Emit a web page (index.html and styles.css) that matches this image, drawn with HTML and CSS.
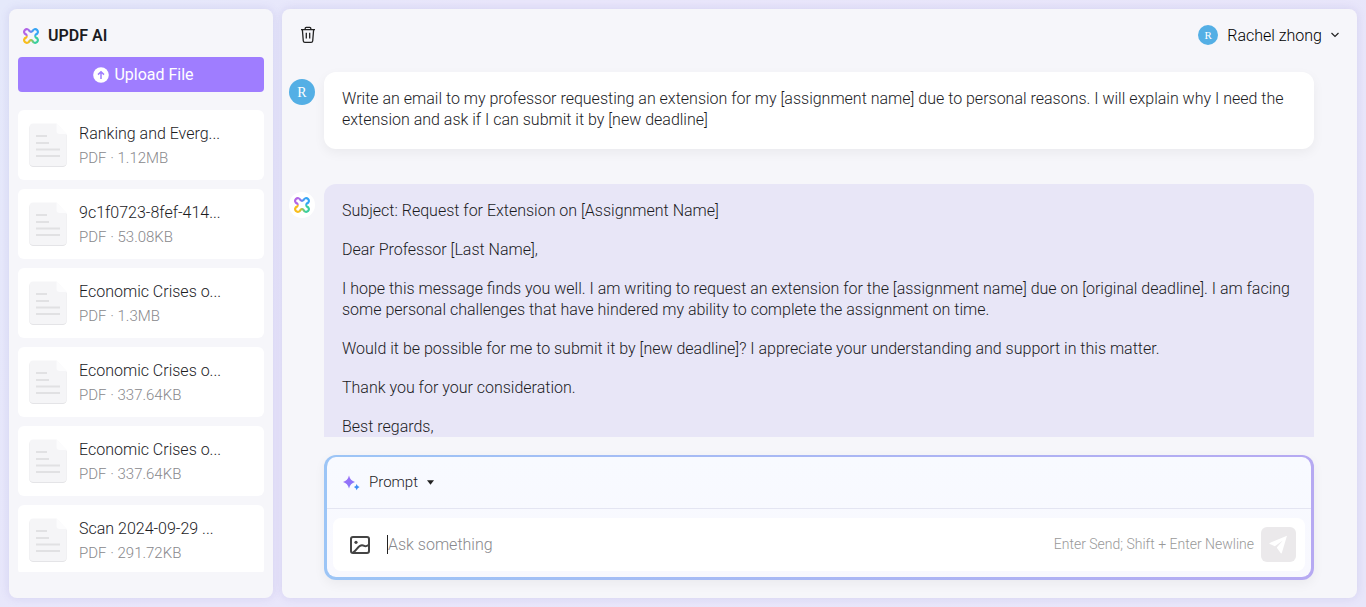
FILE: index.html
```html
<!DOCTYPE html>
<html lang="en">
<head>
    <meta charset="UTF-8">
    <meta name="viewport" content="width=device-width, initial-scale=1.0">
    <title>UPDF AI</title>
    <link rel="stylesheet" href="styles.css">
</head>
<body>
    <!-- Shared icons -->
    <svg class="icon-defs" aria-hidden="true">
        <defs>
            <linearGradient id="petalTop" x1="0" y1="0" x2="1" y2="0">
                <stop offset="0.25" stop-color="#b264e6"/>
                <stop offset="0.7" stop-color="#35a5f5"/>
            </linearGradient>
            <linearGradient id="petalBottom" x1="0" y1="0" x2="1" y2="0">
                <stop offset="0.3" stop-color="#f9bd1c"/>
                <stop offset="0.75" stop-color="#3acf9f"/>
            </linearGradient>
            <linearGradient id="starFill" x1="0" y1="0" x2="1" y2="1">
                <stop offset="0" stop-color="#a46bf7"/>
                <stop offset="1" stop-color="#7d7bfb"/>
            </linearGradient>
        </defs>
        <symbol id="logo" viewBox="0 0 16 16">
            <path d="M3.4 8 Q3.8 7.2 3 6.4 A2.7 2.7 0 1 1 6.4 3 Q7.2 3.8 8 3.8 Q8.8 3.8 9.6 3 A2.7 2.7 0 1 1 13 6.4 Q12.2 7.2 12.6 8" fill="none" stroke="url(#petalTop)" stroke-width="2.2"/>
            <path d="M3.4 8 Q3.8 8.8 3 9.6 A2.7 2.7 0 1 0 6.4 13 Q7.2 12.2 8 12.2 Q8.8 12.2 9.6 13 A2.7 2.7 0 1 0 13 9.6 Q12.2 8.8 12.6 8" fill="none" stroke="url(#petalBottom)" stroke-width="2.2"/>
        </symbol>
        <symbol id="doc" viewBox="0 0 38 44">
            <path d="M4 1.5 H27 L37.5 12 V40 A3.5 3.5 0 0 1 34 43.8 H4 A3.5 3.5 0 0 1 .5 40 V5 A3.5 3.5 0 0 1 4 1.5Z" fill="#dcdcdf"/>
            <path d="M4 .5 H27.5 L37.5 11 V39.5 A3.5 3.5 0 0 1 34 43 H4 A3.5 3.5 0 0 1 .5 39.5 V4 A3.5 3.5 0 0 1 4 .5Z" fill="#f5f5f7"/>
            <path d="M27.5 .5 V8 A3 3 0 0 0 30.5 11 H37.5Z" fill="#fcfcfd"/>
            <path d="M7 13 H18 M7 20 H20 M7 26.5 H31 M7 33 H31" stroke="#e1e1e3" stroke-width="2" fill="none"/>
        </symbol>
    </svg>

    <div class="app">
        <aside class="sidebar">
            <h1 class="brand">
                <svg class="brand-logo"><use href="#logo"/></svg>
                UPDF AI
            </h1>
            <button class="upload-button">
                <svg width="16" height="16" viewBox="0 0 16 16">
                    <circle cx="8" cy="8" r="7.8" fill="#fff"/>
                    <path d="M8 12 V5 M5 7.6 L8 4.7 L11 7.6" fill="none" stroke="#9f7dff" stroke-width="1.5"/>
                </svg>
                Upload File
            </button>
            <ul class="file-list">
                <li class="file">
                    <svg class="file-icon"><use href="#doc"/></svg>
                    <div class="file-info">
                        <div class="file-name">Ranking and Everg...</div>
                        <div class="file-meta">PDF · 1.12MB</div>
                    </div>
                </li>
                <li class="file">
                    <svg class="file-icon"><use href="#doc"/></svg>
                    <div class="file-info">
                        <div class="file-name">9c1f0723-8fef-414...</div>
                        <div class="file-meta">PDF · 53.08KB</div>
                    </div>
                </li>
                <li class="file">
                    <svg class="file-icon"><use href="#doc"/></svg>
                    <div class="file-info">
                        <div class="file-name">Economic Crises o...</div>
                        <div class="file-meta">PDF · 1.3MB</div>
                    </div>
                </li>
                <li class="file">
                    <svg class="file-icon"><use href="#doc"/></svg>
                    <div class="file-info">
                        <div class="file-name">Economic Crises o...</div>
                        <div class="file-meta">PDF · 337.64KB</div>
                    </div>
                </li>
                <li class="file">
                    <svg class="file-icon"><use href="#doc"/></svg>
                    <div class="file-info">
                        <div class="file-name">Economic Crises o...</div>
                        <div class="file-meta">PDF · 337.64KB</div>
                    </div>
                </li>
                <li class="file">
                    <svg class="file-icon"><use href="#doc"/></svg>
                    <div class="file-info">
                        <div class="file-name">Scan 2024-09-29 ...</div>
                        <div class="file-meta">PDF · 291.72KB</div>
                    </div>
                </li>
            </ul>
        </aside>

        <main class="chat">
            <header class="chat-header">
                <button class="icon-button" aria-label="Clear chat">
                    <svg width="16" height="18" viewBox="0 0 16 18" fill="none" stroke="#222" stroke-width="1.3">
                        <path d="M1 3.7 H15 M5.2 3.7 V2.3 A1 1 0 0 1 6.2 1.3 H9.8 A1 1 0 0 1 10.8 2.3 V3.7 M2.4 4 L3.3 15 A1.6 1.6 0 0 0 4.9 16.4 H11.1 A1.6 1.6 0 0 0 12.7 15 L13.6 4 M6.3 6.8 V12.6 M9.7 6.8 V12.6"/>
                    </svg>
                </button>
                <button class="user-menu">
                    <span class="avatar avatar-small">R</span>
                    Rachel zhong
                    <svg width="8" height="6" viewBox="0 0 8 6" fill="none" stroke="#222" stroke-width="1.2">
                        <path d="M.5 1 L4 4.5 L7.5 1"/>
                    </svg>
                </button>
            </header>

            <div class="messages">
                <div class="message">
                    <span class="avatar">R</span>
                    <div class="bubble bubble-user">
                        <p>Write an email to my professor requesting an extension for my [assignment name] due to personal reasons. I will explain why I need the extension and ask if I can submit it by [new deadline]</p>
                    </div>
                </div>
                <div class="message">
                    <span class="avatar avatar-ai"><svg class="ai-logo"><use href="#logo"/></svg></span>
                    <div class="bubble bubble-ai">
                        <p>Subject: Request for Extension on [Assignment Name]</p>
                        <p>Dear Professor [Last Name],</p>
                        <p>I hope this message finds you well. I am writing to request an extension for the [assignment name] due on [original deadline]. I am facing some personal challenges that have hindered my ability to complete the assignment on time.</p>
                        <p>Would it be possible for me to submit it by [new deadline]? I appreciate your understanding and support in this matter.</p>
                        <p>Thank you for your consideration.</p>
                        <p>Best regards,</p>
                    </div>
                </div>
            </div>

            <form class="composer">
                <div class="composer-top">
                    <button type="button" class="prompt-button">
                        <svg width="17" height="16" viewBox="0 0 17 16">
                            <path d="M6 .5 Q7.2 5.6 12 7 Q7.2 8.4 6 13.5 Q4.8 8.4 0 7 Q4.8 5.6 6 .5Z" fill="url(#starFill)"/>
                            <path d="M13.7 9 Q14.2 11.3 16.6 12 Q14.2 12.7 13.7 15.2 Q13.2 12.7 10.9 12 Q13.2 11.3 13.7 9Z" fill="#3d8df5"/>
                        </svg>
                        Prompt
                        <svg width="7" height="5" viewBox="0 0 7 5"><path d="M0 .3 H7 L3.5 4.7Z" fill="#222"/></svg>
                    </button>
                </div>
                <div class="composer-row">
                    <button type="button" class="icon-button" aria-label="Add image">
                        <svg width="20" height="18" viewBox="0 0 20 18" fill="none" stroke="#444" stroke-width="2">
                            <rect x="1" y="1" width="18" height="16" rx="2"/>
                            <path d="M3 16.5 C7 14 8 9.3 12 9.3 C15 9.3 14.5 12 18.5 9"/>
                            <circle cx="6" cy="6.3" r="1.6" fill="#444" stroke="none"/>
                        </svg>
                    </button>
                    <input type="text" class="ask" placeholder="Ask something" aria-label="Ask something">
                    <span class="hint">Enter Send; Shift + Enter Newline</span>
                    <button type="button" class="send" aria-label="Send">
                        <svg width="19" height="19" viewBox="0 0 19 19">
                            <path d="M18 .7 L.7 8 Q0 8.5 .8 9 L5.8 11.2 L13.8 5.6 L8 12.2 L8 13 L11.8 18.2 Q12.4 18.8 12.8 18Z" fill="#fff"/>
                        </svg>
                    </button>
                </div>
            </form>
        </main>
    </div>
</body>
</html>
```
FILE: styles.css
```css
* {
    box-sizing: border-box;
}

body {
    margin: 0;
    font-family: Roboto, "Liberation Sans", sans-serif;
    font-size: 16px;
    font-weight: 300;
    line-height: 21px;
    color: #1c1c1f;
    background: linear-gradient(120deg, #e5e9fb, #e9e6fb 30%, #e8e6fa);
}

button,
input {
    font: inherit;
    color: inherit;
    border: none;
    background: none;
    padding: 0;
}

button {
    cursor: pointer;
}

svg {
    flex: none;
}

.icon-defs {
    position: absolute;
    width: 0;
    height: 0;
}

.app {
    display: flex;
    gap: 9px;
    height: 100vh;
    padding: 9px;
}

.sidebar,
.chat {
    background: #f6f6fa;
    border-radius: 8px;
    box-shadow: 0 0 10px rgba(90, 80, 170, 0.14);
}

/* Sidebar */
.sidebar {
    display: flex;
    flex-direction: column;
    flex: none;
    width: 264px;
    padding: 16px 9px 26px;
}

.brand {
    display: flex;
    align-items: center;
    gap: 9px;
    margin: 0 0 11px;
    padding-left: 5px;
    font-size: 16px;
    font-weight: 600;
    line-height: 21px;
}

.brand-logo,
.ai-logo {
    width: 16px;
    height: 16px;
}

.upload-button {
    display: flex;
    align-items: center;
    justify-content: center;
    gap: 5px;
    flex: none;
    height: 35px;
    margin-bottom: 18px;
    padding-left: 5px;
    border-radius: 4px;
    background: #9f7dff;
    color: white;
    font-weight: 400;
}

.file-list {
    display: flex;
    flex-direction: column;
    gap: 9px;
    flex: 1;
    min-height: 0;
    margin: 0;
    padding: 0;
    list-style: none;
    overflow: hidden;
}

.file {
    display: flex;
    align-items: center;
    gap: 12px;
    flex: none;
    height: 70px;
    padding: 0 11px;
    border-radius: 6px;
    background: white;
}

.file-icon {
    width: 38px;
    height: 44px;
}

.file-info {
    padding-top: 2px;
    line-height: 24px;
}

.file-meta {
    font-size: 15px;
    color: #88888c;
}

/* Chat */
.chat {
    display: flex;
    flex-direction: column;
    flex: 1;
    min-width: 0;
    padding: 12px 0 18px;
}

.chat-header {
    display: flex;
    align-items: center;
    justify-content: space-between;
    height: 28px;
    padding: 0 18px;
}

.icon-button {
    display: flex;
}

.user-menu {
    display: flex;
    align-items: center;
    gap: 9px;
    color: #000;
}

.avatar {
    display: flex;
    align-items: center;
    justify-content: center;
    flex: none;
    width: 26px;
    height: 26px;
    margin-top: 7px;
    border-radius: 50%;
    background: #54afe5;
    color: white;
    font-family: "Liberation Serif", serif;
    font-size: 14px;
    font-weight: 400;
}

.avatar-small {
    width: 20px;
    height: 20px;
    margin-top: 0;
    font-size: 11px;
}

.avatar-ai {
    margin-top: 8px;
    background: white;
}

.messages {
    flex: 1;
    min-height: 0;
    padding: 23px 43px 0 7px;
    overflow: hidden;
}

.message {
    display: flex;
    align-items: flex-start;
    gap: 9px;
    margin-bottom: 35px;
}

.bubble {
    flex: 1;
    min-width: 0;
    padding: 16px 18px 19px;
    border-radius: 12px;
}

.bubble p {
    margin: 0 0 18px;
}

.bubble p:last-child {
    margin-bottom: 0;
}

.bubble-user {
    background: white;
    box-shadow: 0 4px 12px rgba(0, 0, 0, 0.05);
}

.bubble-ai {
    background: #e8e6f7;
}

/* Composer */
.composer {
    flex: none;
    margin: 18px 43px 0 42px;
    border: 3px solid transparent;
    border-top-width: 2px;
    border-radius: 12px;
    background:
        linear-gradient(#f8faff, #f8f8fe) padding-box,
        linear-gradient(90deg, #9cc5f6, #b6a9f2) border-box;
    box-shadow: 0 4px 12px rgba(0, 0, 0, 0.05);
}

.composer-top {
    height: 52px;
    padding: 0 16px;
    border-bottom: 1px solid #e4e5f2;
}

.prompt-button {
    display: flex;
    align-items: center;
    gap: 9px;
    height: 100%;
    font-size: 15px;
}

.composer-row {
    display: flex;
    align-items: center;
    height: 53px;
    margin: 9px 6px 6px;
    padding: 0 9px 0 17px;
    border-radius: 8px;
    background: white;
}

.ask {
    flex: 1;
    min-width: 0;
    height: 19px;
    margin-left: 17px;
    border-left: 1px solid #222;
    outline: none;
}

.ask::placeholder {
    color: #88888c;
}

.hint {
    margin-right: 7px;
    font-size: 14px;
    color: #999;
}

.send {
    display: flex;
    align-items: center;
    justify-content: center;
    width: 35px;
    height: 35px;
    border-radius: 6px;
    background: #ebe9eb;
}
```
